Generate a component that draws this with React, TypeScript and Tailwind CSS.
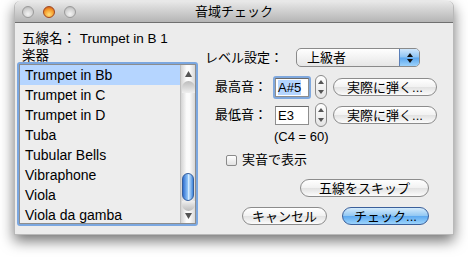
import React from "react";

const font = { fontFamily: '"Liberation Sans", "Noto Sans CJK JP", sans-serif' };

const items = [
  "Trumpet in Bb",
  "Trumpet in C",
  "Trumpet in D",
  "Tuba",
  "Tubular Bells",
  "Vibraphone",
  "Viola",
  "Viola da gamba",
];

const Light = ({ red = false }: { red?: boolean }) => (
  <div
    className={
      red
        ? "w-[12px] h-[12px] rounded-full border border-[#a0461e] bg-[radial-gradient(circle_at_50%_75%,#ffe07a_0%,#f59a2a_55%,#c2451a_100%)]"
        : "w-[12px] h-[12px] rounded-full border border-[#9a9a9a] bg-[radial-gradient(circle_at_50%_70%,#f4f4f4_0%,#cfcfcf_60%,#a9a9a9_100%)]"
    }
  />
);

const Stepper = () => (
  <div className="w-[12px] h-[24px] rounded-[6px] border border-[#8a8a8a] bg-gradient-to-b from-white to-[#e4e4e4] flex flex-col items-center justify-between py-[4px]">
    <svg width="6" height="4" viewBox="0 0 6 4"><path d="M3 0L6 4H0z" fill="#555" /></svg>
    <svg width="6" height="4" viewBox="0 0 6 4"><path d="M0 0H6L3 4z" fill="#555" /></svg>
  </div>
);

const AquaButton = ({ label, w, blue = false }: { label: string; w: string; blue?: boolean }) => (
  <div
    className={
      (blue
        ? "border-[#3a5f9a] bg-[linear-gradient(to_bottom,#d4ebfc_0%,#93c8f3_48%,#5eaaf0_52%,#9cd4fc_100%)] "
        : "border-[#8c8c8c] bg-[linear-gradient(to_bottom,#ffffff_0%,#f2f2f2_48%,#e2e2e2_52%,#fbfbfb_100%)] ") +
      w +
      " h-[18px] rounded-full border flex items-center justify-center text-[13px] text-black leading-none"
    }
  >
    {label}
  </div>
);

const Field = ({ value, focus = false }: { value: string; focus?: boolean }) => (
  <div
    className={
      focus
        ? "w-[38px] h-[23px] rounded-[3px] border-[2px] border-[#7fa8de] p-0"
        : "w-[38px] h-[23px] p-[2px]"
    }
  >
    <div className="w-full h-full bg-white border border-[#8e8e8e] border-t-[#6a6a6a] flex items-start px-[2px] pt-[1px] text-[13px] leading-[15px]">
      <span className={focus ? "bg-[#b5d5ff]" : ""}>{value}</span>
    </div>
  </div>
);

export default function App() {
  return (
    <div className="w-[468px] h-[259px] bg-white relative overflow-hidden" style={font}>
      <div className="ml-[14px] mt-[1px] w-[440px] h-[234px] rounded-t-[6px] bg-[#ececec] shadow-[0_6px_14px_rgba(0,0,0,0.55)] flex flex-col border border-[#b9b9b9] border-t-0">
        {/* title bar */}
        <div className="h-[22px] rounded-t-[6px] bg-gradient-to-b from-[#e9e9e9] to-[#b5b5b5] border-b border-[#707070] flex items-center relative">
          <div className="flex gap-[9px] ml-[7px]">
            <Light />
            <Light red />
            <Light />
          </div>
          <div className="absolute inset-0 flex items-center justify-center text-[13px] text-black">
            音域チェック
          </div>
        </div>
        {/* body */}
        <div className="flex flex-1">
          <div className="flex flex-col ml-[2px] w-[182px]">
            <div className="ml-[5px] mt-[8px] h-[16px] text-[13.5px] leading-[16px] text-black">
              五線名： Trumpet in B 1
            </div>
            <div className="ml-[5px] h-[16px] mt-[1px] text-[13.5px] leading-[16px] text-black">楽器</div>
            <div className="mt-[-2px] w-[181px] h-[164px] rounded-[3px] border-[2px] border-[#7ba7e0] flex">
              <div className="flex-1 border border-[#8d8d8d] bg-[#ededed] flex overflow-hidden">
                <div className="flex-1 flex flex-col overflow-hidden">
                  {items.map((t, i) => (
                    <div
                      key={t}
                      className={
                        (i === 0 ? "bg-[#b5d5ff] " : "") +
                        "h-[20px] shrink-0 pl-[5px] text-[14px] leading-[20px] text-black whitespace-nowrap"
                      }
                    >
                      {t}
                    </div>
                  ))}
                </div>
                <div className="w-[15px] border-l border-[#bdbdbd] bg-[linear-gradient(to_right,#d4d4d4,#fbfbfb_40%,#fbfbfb_60%,#d8d8d8)] flex flex-col items-center">
                  <svg className="mt-[6px]" width="7" height="6" viewBox="0 0 7 6"><path d="M3.5 0L7 6H0z" fill="#555" /></svg>
                  <div className="mt-[4px] w-[13px] h-[12px] rounded-t-full bg-gradient-to-b from-[#bcbcbc] to-[#efefef]" />
                  <div className="flex-1" />
                  <div className="w-[12px] h-[28px] rounded-full border border-[#355f9e] bg-[linear-gradient(to_right,#2f6fd0,#8fc3f7_45%,#d2ebff_55%,#3f86dc)]" />
                  <div className="w-[13px] h-[10px] rounded-b-full bg-gradient-to-t from-[#bcbcbc] to-[#efefef]" />
                  <svg className="mt-[2px] mb-[4px]" width="7" height="6" viewBox="0 0 7 6"><path d="M0 0H7L3.5 6z" fill="#555" /></svg>
                </div>
              </div>
            </div>
          </div>

          {/* right side */}
          <div className="flex flex-col ml-[6px] flex-1">
            <div className="mt-[25px] flex items-center h-[19px]">
              <div className="w-[90px] text-[13px] text-black">レベル設定：</div>
              <div className="ml-[1px] w-[124px] h-[19px] rounded-[5px] border border-[#8a8a8a] bg-gradient-to-b from-white to-[#e6e6e6] flex overflow-hidden">
                <div className="flex-1 pl-[10px] text-[13px] leading-[17px] text-black">上級者</div>
                <div className="w-[20px] border-l border-[#5a7fb8] bg-[linear-gradient(to_bottom,#cfe6fb_0%,#8ec4f3_48%,#5aa6ee_52%,#9cd2fb_100%)] flex flex-col items-center justify-center gap-[2px]">
                  <svg width="6" height="4" viewBox="0 0 6 4"><path d="M3 0L6 4H0z" fill="#111" /></svg>
                  <svg width="6" height="4" viewBox="0 0 6 4"><path d="M0 0H6L3 4z" fill="#111" /></svg>
                </div>
              </div>
            </div>

            <div className="mt-[7px] flex items-center h-[26px]">
              <div className="ml-[10px] w-[58px] text-[13px] text-black">最高音：</div>
              <Field value="A#5" focus />
              <div className="ml-[4px]"><Stepper /></div>
              <div className="ml-[6px]"><AquaButton label="実際に弾く..." w="w-[104px]" /></div>
            </div>

            <div className="mt-[3px] flex items-center h-[24px]">
              <div className="ml-[10px] w-[58px] text-[13px] text-black">最低音：</div>
              <Field value="E3" />
              <div className="ml-[4px]"><Stepper /></div>
              <div className="ml-[6px]"><AquaButton label="実際に弾く..." w="w-[104px]" /></div>
            </div>

            <div className="mt-[2px] ml-[69px] h-[16px] text-[13px] leading-[16px] text-black">(C4 = 60)</div>

            <div className="mt-[8px] ml-[21px] flex items-center h-[14px]">
              <div className="w-[11px] h-[11px] rounded-[2px] border border-[#8a8a8a] bg-gradient-to-b from-white to-[#e2e2e2]" />
              <div className="ml-[5px] text-[13px] text-black">実音で表示</div>
            </div>

            <div className="mt-[12px] ml-[95px]">
              <AquaButton label="五線をスキップ" w="w-[129px]" />
            </div>

            <div className="mt-[10px] ml-[37px] flex gap-[15px]">
              <AquaButton label="キャンセル" w="w-[85px]" />
              <AquaButton label="チェック..." w="w-[87px]" blue />
            </div>
          </div>
        </div>
      </div>
    </div>
  );
}
